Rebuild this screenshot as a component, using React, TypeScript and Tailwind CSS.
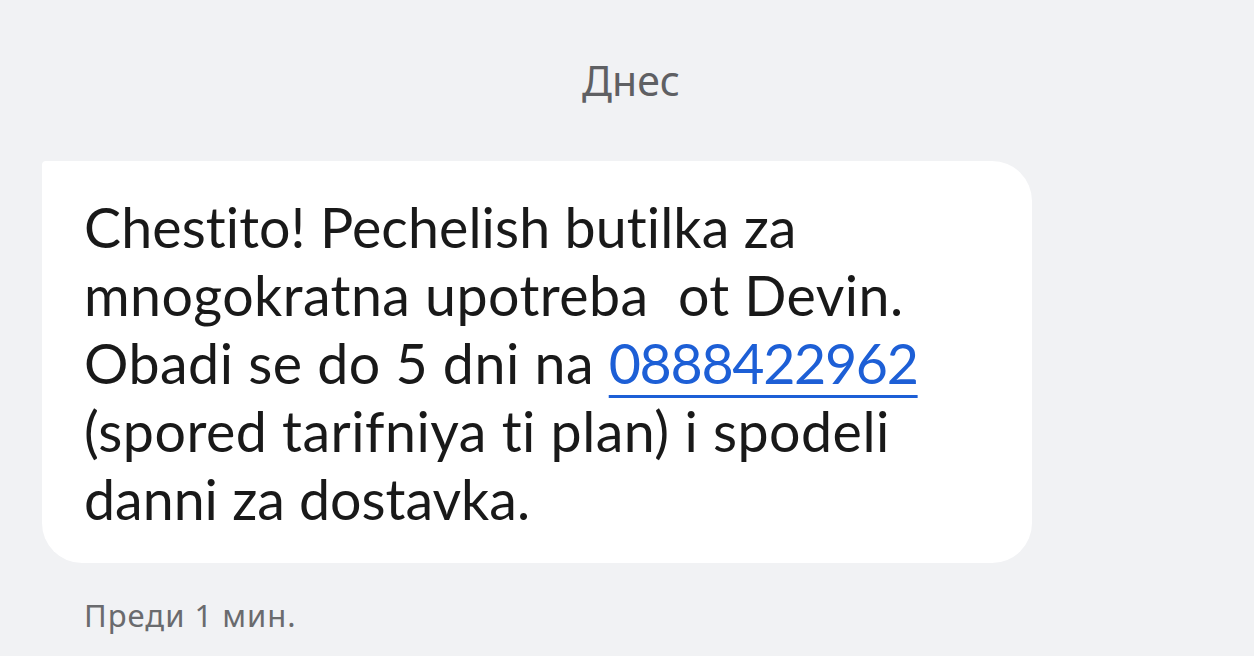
import React from "react";

export default function App() {
  return (
    <div
      className="w-[1254px] h-[656px] bg-[#f1f2f4] overflow-hidden flex flex-col"
      style={{ fontFamily: '"Noto Sans", sans-serif' }}
    >
      <div className="pt-[54px] pl-[8px] text-center text-[41px] leading-[52px] text-[#5f6063]">Днес</div>
      <div
        className="mt-[55px] ml-[42px] w-[990px] h-[402px] bg-white rounded-[40px] rounded-tl-[4px] px-[42px] pt-[32px] text-[55.5px] leading-[68px] text-[#191919] whitespace-pre [font-variant-ligatures:none] [font-feature-settings:'liga'_0,'clig'_0]"
        style={{ fontFamily: 'Lato, "Noto Sans", sans-serif' }}
      >
        <div className="tracking-[0.1px]">Chestito! Pechelish butilka za</div>
        <div className="tracking-[0.45px]">mnogokratna upotreba  ot Devin.</div>
        <div>
          <span className="tracking-[0.5px]">Obadi se do 5 dni na </span>
          <span className="text-[#1d5fd6] underline decoration-[3px] underline-offset-[11px] tracking-[-1.3px]">0888422962</span>
        </div>
        <div className="tracking-[0.5px]">(spored tarifniya ti plan) i spodeli</div>
        <div>danni za dostavka.</div>
      </div>
      <div className="mt-[30px] ml-[84px] text-[31px] leading-[44px] tracking-[1px] text-[#6a6b6e]">Преди 1 мин.</div>
    </div>
  );
}
